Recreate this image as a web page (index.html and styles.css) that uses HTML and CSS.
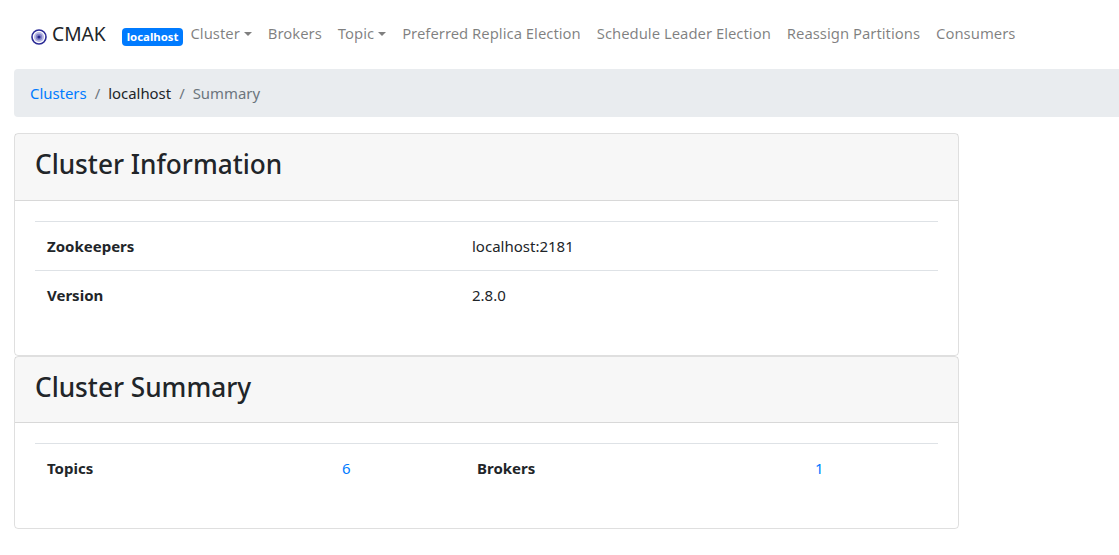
FILE: index.html
```html
<!DOCTYPE html>
<html lang="en">
<head>
  <meta charset="UTF-8">
  <meta name="viewport" content="width=device-width, initial-scale=1">
  <title>CMAK - Summary</title>
  <link rel="stylesheet" href="styles.css">
</head>
<body>
  <nav class="navbar">
    <a class="brand" href="#">
      <svg class="brand-icon" width="16" height="16" viewBox="0 0 16 16" aria-hidden="true">
        <circle cx="8" cy="8" r="7" fill="#fff" stroke="#2b2b96" stroke-width="1.6"/>
        <circle cx="8" cy="8" r="5" fill="#b9b9e2"/>
        <circle cx="8" cy="8" r="3.2" fill="#8282c8"/>
        <circle cx="8" cy="8" r="1.6" fill="#26268c"/>
      </svg>
      CMAK
    </a>
    <span class="badge">localhost</span>
    <a class="nav-link caret" href="#">Cluster</a>
    <a class="nav-link" href="#">Brokers</a>
    <a class="nav-link caret" href="#">Topic</a>
    <a class="nav-link" href="#">Preferred Replica Election</a>
    <a class="nav-link" href="#">Schedule Leader Election</a>
    <a class="nav-link" href="#">Reassign Partitions</a>
    <a class="nav-link" href="#">Consumers</a>
  </nav>

  <ol class="breadcrumb">
    <li><a href="#">Clusters</a></li>
    <li class="crumb-sep">/</li>
    <li>localhost</li>
    <li class="crumb-sep">/</li>
    <li class="crumb-active">Summary</li>
  </ol>

  <div class="card">
    <div class="card-header"><h3>Cluster Information</h3></div>
    <div class="card-body">
      <table class="info-table">
        <tr><th>Zookeepers</th><td>localhost:2181</td></tr>
        <tr><th>Version</th><td>2.8.0</td></tr>
      </table>
    </div>
  </div>

  <div class="card">
    <div class="card-header card-header-short"><h3>Cluster Summary</h3></div>
    <div class="card-body">
      <table class="summary-table">
        <tr>
          <th>Topics</th>
          <td><a href="#">6</a></td>
          <th>Brokers</th>
          <td><a href="#">1</a></td>
        </tr>
      </table>
    </div>
  </div>
</body>
</html>
```

FILE: styles.css
```css
* {
  box-sizing: border-box;
}
body {
  margin: 0;
  padding-left: 14px;
  font-family: "Noto Sans", "Open Sans", sans-serif;
  font-size: 15px;
  line-height: 24px;
  color: #212529;
  background-color: #fff;
}
a {
  color: #007bff;
  text-decoration: none;
}
.navbar {
  display: flex;
  align-items: center;
  height: 69px;
  padding: 0 0 4px 17px;
  font-size: 14.85px;
}
.brand {
  display: flex;
  align-items: center;
  font-size: 19.2px;
  color: #212529;
  margin-top: 2px;
  margin-right: 16px;
}
.brand-icon {
  margin-right: 5px;
  margin-top: 7px;
}
.badge {
  background-color: #007bff;
  color: #fff;
  font-size: 11.4px;
  font-weight: 700;
  line-height: 18px;
  padding: 0 5px;
  border-radius: 4px;
  margin-top: 8px;
  margin-right: -1px;
}
.nav-link {
  color: rgba(0, 0, 0, 0.5);
  padding: 0 8px;
}
.caret::after {
  content: "";
  display: inline-block;
  margin-left: 4px;
  vertical-align: 3px;
  border-top: 4px solid;
  border-left: 4px solid transparent;
  border-right: 4px solid transparent;
}
.breadcrumb {
  display: flex;
  list-style: none;
  margin: 0 0 16px;
  padding: 12px 16px;
  height: 48px;
  background-color: #e9ecef;
  border-radius: 4px 0 0 4px;
  font-size: 14.9px;
}
.crumb-sep {
  color: #6c757d;
  padding: 0 8px;
}
.crumb-active {
  color: #6c757d;
}
.card {
  width: 945px;
  border: 1px solid rgba(0, 0, 0, 0.125);
  border-radius: 4px;
}
.card-header {
  padding: 10px 20px 15px;
  background-color: rgba(0, 0, 0, 0.03);
  border-bottom: 1px solid rgba(0, 0, 0, 0.125);
}
.card-header-short {
  padding-bottom: 14px;
}
h3 {
  margin: 0;
  font-size: 26.2px;
  font-weight: 500;
  line-height: 41px;
}
.card-body {
  padding: 20px 20px 0;
}
table {
  width: 100%;
  border-collapse: collapse;
  table-layout: fixed;
  margin-bottom: 36px;
}
th, td {
  text-align: left;
  padding: 12px;
  border-top: 1px solid #dee2e6;
  font-size: 15px;
}
th {
  font-weight: 700;
}
.info-table th {
  width: 425px;
}
.summary-table th:nth-child(1) {
  width: 295px;
}
.summary-table td:nth-child(2) {
  width: 135px;
}
.summary-table th:nth-child(3) {
  width: 338px;
}
```
